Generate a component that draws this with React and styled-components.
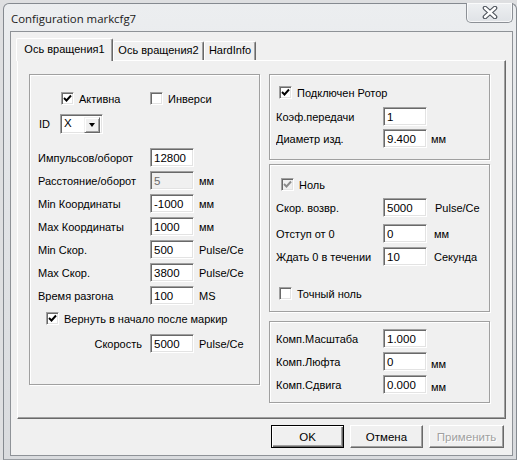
import styled, { createGlobalStyle } from 'styled-components'

const GlobalStyle = createGlobalStyle`
  html, body { margin: 0; padding: 0; }
  body {
    background: #dedfe1;
    font-family: "Liberation Sans", Arial, sans-serif;
    font-size: 11px;
    color: #000;
  }
`

const Window = styled.div`
  box-sizing: border-box;
  margin: 3px 0 0 3px;
  width: 514px;
  height: 457px;
  border: 1px solid #858a90;
  border-bottom-color: #9a9ea3;
  border-radius: 6px 6px 0 0;
  background: linear-gradient(180deg, #eceef0 0%, #e2e4e7 40%, #d9dbde 100%);
  display: flex;
  flex-direction: column;
  padding: 0 3px 3px 6px;
`

const TitleBar = styled.div`
  height: 27px;
  display: flex;
  align-items: flex-start;
  flex-shrink: 0;
`

const Title = styled.div`
  font-family: "Open Sans", "Noto Sans", sans-serif;
  font-size: 11.4px;
  color: #1a1a1a;
  margin: 7px 0 0 1px;
`

const CloseButton = styled.div`
  box-sizing: border-box;
  margin: -1px 0 0 auto;
  width: 47px;
  height: 20px;
  border: 1px solid #8c9096;
  border-top: none;
  border-radius: 0 0 5px 5px;
  background: linear-gradient(180deg, #eef0f2, #dfe2e6);
  box-shadow: inset 0 0 0 1px rgba(255, 255, 255, 0.7);
  display: flex;
  align-items: center;
  justify-content: center;
`

const Client = styled.div`
  flex: 1;
  box-sizing: border-box;
  background: #f0f0f0;
  border: 1px solid #8e9297;
  padding: 6px 6px 0 6px;
  display: flex;
  flex-direction: column;
`

const TabStrip = styled.div`
  display: flex;
  align-items: flex-end;
  height: 22px;
  margin-left: -1px;
`

const Tab = styled.div`
  box-sizing: border-box;
  position: relative;
  z-index: ${p => (p.$active ? 2 : 1)};
  height: ${p => (p.$active ? 23 : 19)}px;
  margin-bottom: ${p => (p.$active ? -1 : 0)}px;
  width: ${p => p.$w}px;
  border: 1px solid #fff;
  border-right-color: #696969;
  border-bottom: none;
  border-radius: 2px 2px 0 0;
  box-shadow: inset -1px 0 0 #a0a0a0;
  background: #f0f0f0;
  display: flex;
  justify-content: center;
  padding-top: ${p => (p.$active ? 4 : 2)}px;
`

const Panel = styled.div`
  box-sizing: border-box;
  height: 359px;
  border: 1px solid #fff;
  border-right-color: #696969;
  border-bottom-color: #696969;
  box-shadow: inset -1px -1px 0 #a0a0a0;
  display: grid;
  grid-template-columns: 231px 221px;
  column-gap: 9px;
  align-items: start;
  padding: 13px 0 0 11px;
`

const Group = styled.div`
  box-sizing: border-box;
  height: ${p => p.$h}px;
  margin-top: ${p => p.$mt || 0}px;
  border: 1px solid #a0a0a0;
  box-shadow: inset 1px 1px 0 #fff, 1px 1px 0 #fff;
  padding: ${p => p.$pt}px 0 0 ${p => p.$pl}px;
  display: flex;
  flex-direction: column;
`

const Column = styled.div`
  display: flex;
  flex-direction: column;
  gap: ${p => p.$gap}px;
`

const Row = styled.div`
  display: flex;
  align-items: center;
  height: 23px;
  margin-top: ${p => p.$mt || 0}px;
  padding-left: ${p => p.$pl || 0}px;
`

const Label = styled.span`
  box-sizing: border-box;
  width: ${p => p.$w}px;
  flex-shrink: 0;
  white-space: nowrap;
  overflow: hidden;
  text-align: ${p => (p.$right ? 'right' : 'left')};
  padding-right: ${p => (p.$right ? 8 : 0)}px;
`

const Input = styled.div`
  box-sizing: border-box;
  width: 44px;
  height: 19px;
  flex-shrink: 0;
  background: ${p => (p.$disabled ? '#f0f0f0' : '#fff')};
  color: ${p => (p.$disabled ? '#6d6d6d' : '#000')};
  border-top: 1px solid #a0a0a0;
  border-left: 1px solid #a0a0a0;
  border-right: 1px solid #fff;
  border-bottom: 1px solid #fff;
  box-shadow: inset 1px 1px 0 #696969, inset -1px -1px 0 #e3e3e3;
  padding: 2px 0 0 3px;
  font-size: 11.5px;
  line-height: 14px;
`

const Unit = styled.span`
  margin-left: ${p => p.$gap ?? 5}px;
  margin-top: ${p => (p.$drop ? 5 : 0)}px;
  white-space: nowrap;
`

const CheckWrap = styled.div`
  display: flex;
  align-items: center;
  gap: 5px;
  width: ${p => (p.$w ? `${p.$w}px` : 'auto')};
  white-space: nowrap;
`

const Box = styled.div`
  box-sizing: border-box;
  width: 13px;
  height: 13px;
  flex-shrink: 0;
  background: ${p => (p.$disabled ? '#f0f0f0' : '#fff')};
  border-top: 1px solid #a0a0a0;
  border-left: 1px solid #a0a0a0;
  border-right: 1px solid #fff;
  border-bottom: 1px solid #fff;
  box-shadow: inset 1px 1px 0 #696969, inset -1px -1px 0 #e3e3e3;
  display: flex;
  align-items: center;
  justify-content: center;
`

const Combo = styled.div`
  box-sizing: border-box;
  width: 43px;
  height: 20px;
  background: #fff;
  border-top: 1px solid #a0a0a0;
  border-left: 1px solid #a0a0a0;
  border-right: 1px solid #fff;
  border-bottom: 1px solid #fff;
  box-shadow: inset 1px 1px 0 #696969, inset -1px -1px 0 #e3e3e3;
  display: flex;
  padding: 2px;
  font-size: 11.5px;
`

const ComboText = styled.span`
  flex: 1;
  padding: 0 0 0 1px;
  line-height: 13px;
`

const ComboButton = styled.div`
  box-sizing: border-box;
  width: 16px;
  height: 16px;
  background: #f0f0f0;
  border: 1px solid;
  border-color: #f0f0f0 #696969 #696969 #f0f0f0;
  box-shadow: inset 1px 1px 0 #fff, inset -1px -1px 0 #a0a0a0;
  display: flex;
  align-items: center;
  justify-content: center;
`

const Arrow = styled.div`
  width: 0;
  height: 0;
  border-left: 3.5px solid transparent;
  border-right: 3.5px solid transparent;
  border-top: 4px solid #000;
`

const ButtonRow = styled.div`
  display: flex;
  justify-content: flex-end;
  gap: 6px;
  padding: 6px 2px 0 0;
`

const Button = styled.div`
  box-sizing: border-box;
  width: ${p => p.$w || 73}px;
  height: 23px;
  display: flex;
  align-items: center;
  justify-content: center;
  background: #f0f0f0;
  border: 1px solid;
  border-color: ${p => (p.$default ? '#000' : '#fff #696969 #696969 #fff')};
  box-shadow: ${p =>
    p.$default
      ? 'inset 1px 1px 0 #fff, inset -1px -1px 0 #696969, inset -2px -2px 0 #a0a0a0'
      : 'inset -1px -1px 0 #a0a0a0, inset 1px 1px 0 #f0f0f0'};
  color: ${p => (p.$disabled ? '#a0a0a0' : '#000')};
  text-shadow: ${p => (p.$disabled ? '1px 1px 0 #fff' : 'none')};
  font-size: 11.5px;
`

const Check = ({ color = '#000' }) => (
  <svg width="9" height="9" viewBox="0 0 9 9">
    <path d="M1 4 L3.5 6.5 L8 1.5" fill="none" stroke={color} strokeWidth="1.9" />
  </svg>
)

const CheckBox = ({ label, checked, disabled, w }) => (
  <CheckWrap $w={w}>
    <Box $disabled={disabled}>{checked && <Check color={disabled ? '#8a8a8a' : '#000'} />}</Box>
    <span>{label}</span>
  </CheckWrap>
)

const Field = ({ label, value, unit, lw = 112, gap, drop, disabled, right, mt }) => (
  <Row $mt={mt}>
    <Label $w={lw} $right={right}>{label}</Label>
    <Input $disabled={disabled}>{value}</Input>
    {unit && <Unit $gap={gap} $drop={drop}>{unit}</Unit>}
  </Row>
)

const axisFields = [
  ['Импульсов/оборот', '12800', null],
  ['Расстояние/оборот', '5', 'мм', true],
  ['Min Координаты', '-1000', 'мм'],
  ['Max Координаты', '1000', 'мм'],
  ['Min Скор.', '500', 'Pulse/Ce'],
  ['Max Скор.', '3800', 'Pulse/Ce'],
  ['Время разгона', '100', 'MS'],
]

export default function App() {
  return (
    <>
      <GlobalStyle />
      <Window>
        <TitleBar>
          <Title>Configuration markcfg7</Title>
          <CloseButton>
            <svg width="16" height="13" viewBox="0 0 16 13">
              <path d="M3 2 L13 11 M13 2 L3 11" stroke="#4d535b" strokeWidth="4.6" strokeLinecap="round" />
              <path d="M3 2 L13 11 M13 2 L3 11" stroke="#fff" strokeWidth="2.4" strokeLinecap="round" />
            </svg>
          </CloseButton>
        </TitleBar>
        <Client>
          <TabStrip>
            <Tab $active $w={97}>Ось вращения1</Tab>
            <Tab $w={91}>Ось вращения2</Tab>
            <Tab $w={52}>HardInfo</Tab>
          </TabStrip>
          <Panel>
            <Group $h={311} $pt={12} $pl={8}>
              <Row $pl={23}>
                <CheckBox label="Активна" checked w={89} />
                <CheckBox label="Инверси" />
              </Row>
              <Row $mt={2} $pl={1}>
                <Label $w={21}>ID</Label>
                <Combo>
                  <ComboText>X</ComboText>
                  <ComboButton><Arrow /></ComboButton>
                </Combo>
              </Row>
              {axisFields.map(([label, value, unit, disabled], i) => (
                <Field key={label} label={label} value={value} unit={unit} disabled={disabled} mt={i === 0 ? 11 : 0} />
              ))}
              <Row $pl={8}>
                <CheckBox label="Вернуть в начало после маркир" checked />
              </Row>
              <Field label="Скорость" value="5000" unit="Pulse/Ce" right mt={2} />
            </Group>
            <Column $gap={4}>
              <Group $h={86} $pt={6} $pl={6}>
                <Row $pl={3}>
                  <CheckBox label="Подключен Ротор" checked />
                </Row>
                <Field label="Коэф.передачи" value="1" lw={107} mt={1} />
                <Field label="Диаметр изд." value="9.400" unit="мм" lw={107} gap={4} mt={-1} />
              </Group>
              <Group $h={148} $pt={8} $pl={6}>
                <Row $pl={5}>
                  <CheckBox label="Ноль" checked disabled />
                </Row>
                <Field label="Скор. возвр." value="5000" unit="Pulse/Ce" lw={107} gap={8} />
                <Field label="Отступ от 0" value="0" unit="мм" lw={107} gap={7} mt={3} />
                <Field label="Ждать 0 в течении" value="10" unit="Секунда" lw={107} gap={7} />
                <Row $mt={14} $pl={3}>
                  <CheckBox label="Точный ноль" />
                </Row>
              </Group>
              <Group $h={82} $pt={5} $pl={6} $mt={5}>
                <Field label="Комп.Масштаба" value="1.000" lw={107} />
                <Field label="Комп.Люфта" value="0" unit="мм" lw={107} gap={4} drop />
                <Field label="Комп.Сдвига" value="0.000" unit="мм" lw={107} gap={4} drop />
              </Group>
            </Column>
          </Panel>
          <ButtonRow>
            <Button $default>OK</Button>
            <Button>Отмена</Button>
            <Button $w={75} $disabled>Применить</Button>
          </ButtonRow>
        </Client>
      </Window>
    </>
  )
}
